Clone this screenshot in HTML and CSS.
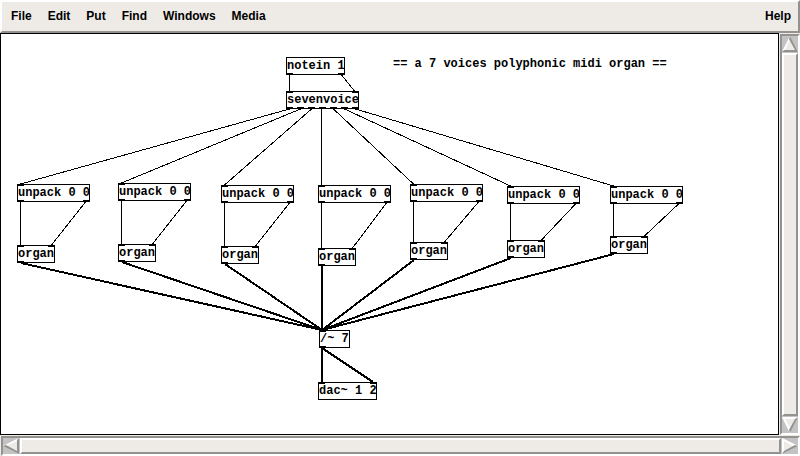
FILE: index.html
```html
<!DOCTYPE html>
<html lang="en">
<head>
<meta charset="utf-8">
<title>Patch editor</title>
<link rel="stylesheet" href="styles.css">
</head>
<body>
<nav class="menubar">
  <button type="button">File</button>
  <button type="button">Edit</button>
  <button type="button">Put</button>
  <button type="button">Find</button>
  <button type="button">Windows</button>
  <button type="button">Media</button>
  <button type="button" class="help">Help</button>
</nav>
<div class="workspace">
  <main class="canvas">
    <svg class="wires" viewBox="1 34 777 400" width="777" height="400" shape-rendering="crispEdges" aria-hidden="true">
      <!-- control cords -->
      <path class="cord" d="M289.5 75V91M341.5 75L354.5 91
        M289.5 109L20.5 184M300.5 109L121.5 183M311.5 109L224.5 185M321.5 109V185M333.5 109L413.5 184M344.5 109L510.5 186M355.5 109L613.5 186
        M20.5 202V245M85.5 202L51.5 245
        M121.5 201V244M186.5 201L152.5 244
        M224.5 203V246M289.5 203L255.5 246
        M321.5 203V248M386.5 203L352.5 248
        M413.5 202V242M478.5 202L444.5 242
        M510.5 204V240M575.5 204L541.5 240
        M613.5 204V236M678.5 204L644.5 236"/>
      <!-- signal cords -->
      <path class="signal" d="M21 263L322 330M122 262L322 330M225 264L322 330M322 266V330M414 260L322 330M511 258L322 330M614 254L322 330
        M322 348V382M322 348L373 382"/>
      <!-- inlets and outlets -->
      <path class="port" d="M286 74h7M338 74h7M286 92h7M352 92h7
        M286 108h7M297 108h7M308 108h7M319 108h7M330 108h7M341 108h7M352 108h7
        M17 185h7M17 201h7M83 201h7M17 246h7M48 246h7M17 262h7
        M118 184h7M118 200h7M184 200h7M118 245h7M149 245h7M118 261h7
        M221 186h7M221 202h7M287 202h7M221 247h7M252 247h7M221 263h7
        M318 186h7M318 202h7M384 202h7M318 249h7M349 249h7M318 265h7
        M410 185h7M410 201h7M476 201h7M410 243h7M441 243h7M410 259h7
        M507 187h7M507 203h7M573 203h7M507 241h7M538 241h7M507 257h7
        M610 187h7M610 203h7M676 203h7M610 237h7M641 237h7M610 253h7
        M319 331h7M319 347h7M318 383h7M370 383h7"/>
    </svg>
    <p class="comment">== a 7 voices polyphonic midi organ ==</p>
    <div class="node medium notein">notein 1</div>
    <div class="node wide sevenvoice">sevenvoice</div>
    <div class="node wide unpack1">unpack 0 0</div>
    <div class="node wide unpack2">unpack 0 0</div>
    <div class="node wide unpack3">unpack 0 0</div>
    <div class="node wide unpack4">unpack 0 0</div>
    <div class="node wide unpack5">unpack 0 0</div>
    <div class="node wide unpack6">unpack 0 0</div>
    <div class="node wide unpack7">unpack 0 0</div>
    <div class="node narrow organ1">organ</div>
    <div class="node narrow organ2">organ</div>
    <div class="node narrow organ3">organ</div>
    <div class="node narrow organ4">organ</div>
    <div class="node narrow organ5">organ</div>
    <div class="node narrow organ6">organ</div>
    <div class="node narrow organ7">organ</div>
    <div class="node tiny divide">/~ 7</div>
    <div class="node medium dac">dac~ 1 2</div>
  </main>
  <div class="scrollbar vertical">
    <button type="button" class="arrow" aria-label="Scroll up">
      <svg viewBox="0 0 16 16" width="16" height="16"><path class="face" d="M8 0L16 16H0z"/><path class="light" d="M8 0L0 16H2L8 3z"/><path class="dark" d="M8 0L16 16H0L2 14H13L7 3z"/></svg>
    </button>
    <div class="thumb"></div>
    <button type="button" class="arrow" aria-label="Scroll down">
      <svg viewBox="0 0 16 16" width="16" height="16"><path class="face" d="M0 0H16L8 16z"/><path class="light" d="M0 0H16L14 2H3L9 13L8 16z"/><path class="dark" d="M16 0L8 16L7 13L13 2z"/></svg>
    </button>
  </div>
  <div class="scrollbar horizontal">
    <button type="button" class="arrow" aria-label="Scroll left">
      <svg viewBox="0 0 16 16" width="16" height="16"><path class="face" d="M0 8L16 0V16z"/><path class="light" d="M0 8L16 0V2L3 8z"/><path class="dark" d="M0 8L16 16V0L14 2V13L3 7z"/></svg>
    </button>
    <div class="thumb"></div>
    <button type="button" class="arrow" aria-label="Scroll right">
      <svg viewBox="0 0 16 16" width="16" height="16"><path class="face" d="M0 0L16 8L0 16z"/><path class="light" d="M0 0V16L2 14V3L13 9L16 8z"/><path class="dark" d="M0 16L16 8L13 7L2 13z"/></svg>
    </button>
  </div>
</div>
</body>
</html>
```
FILE: styles.css
```css
* { box-sizing: border-box; }

html, body { height: 100%; }

body {
  margin: 0;
  display: flex;
  flex-direction: column;
  background: #eeebe7;
  color: #000;
}

button {
  margin: 0;
  padding: 0;
  border: 0;
  background: none;
  color: inherit;
  font: inherit;
}

.menubar {
  display: flex;
  flex: none;
  gap: 16px;
  height: 33px;
  padding: 0 7px 2px 9px;
  border: 2px solid #fff;
  border-right-color: #949290;
  border-bottom-color: #949290;
  font: bold 12px/24px "Liberation Sans", Arial, sans-serif;
}

.help { margin-left: auto; }

.workspace {
  display: grid;
  flex: 1;
  min-height: 0;
  grid-template-columns: 1fr 21px;
  grid-template-rows: 1fr 21px;
}

.canvas {
  position: relative;
  overflow: hidden;
  border: 1px solid #000;
  background: #fff;
  font: bold 12px/16px "Liberation Mono", "Courier New", monospace;
  white-space: nowrap;
}

.wires {
  position: absolute;
  left: 0;
  top: 0;
}

.wires path { fill: none; stroke: #000; }
.cord { stroke-width: 1px; }
.signal, .port { stroke-width: 2px; }

.node {
  position: absolute;
  height: 18px;
  border: 1px solid #000;
}

.wide { width: 73px; }
.medium { width: 59px; }
.narrow { width: 38px; }
.tiny { width: 31px; }

.comment {
  position: absolute;
  left: 392px;
  top: 22px;
  margin: 0;
}

.notein { left: 285px; top: 23px; }
.sevenvoice { left: 285px; top: 57px; }
.unpack1 { left: 16px; top: 150px; }
.unpack2 { left: 117px; top: 149px; }
.unpack3 { left: 220px; top: 151px; }
.unpack4 { left: 317px; top: 151px; }
.unpack5 { left: 409px; top: 150px; }
.unpack6 { left: 506px; top: 152px; }
.unpack7 { left: 609px; top: 152px; }
.organ1 { left: 16px; top: 211px; }
.organ2 { left: 117px; top: 210px; }
.organ3 { left: 220px; top: 212px; }
.organ4 { left: 317px; top: 214px; }
.organ5 { left: 409px; top: 208px; }
.organ6 { left: 506px; top: 206px; }
.organ7 { left: 609px; top: 202px; }
.divide { left: 318px; top: 296px; }
.dac { left: 317px; top: 348px; }

.scrollbar {
  display: flex;
  gap: 1px;
  border: 2px solid #949290;
  border-right-color: #fff;
  border-bottom-color: #fff;
  background: #c3c3c3;
}

.vertical {
  flex-direction: column;
  margin: 1px 0 0 1px;
}

.horizontal {
  grid-column: 1 / -1;
  margin: 1px 0 0 1px;
}

.thumb {
  flex: 1;
  border: 2px solid #949290;
  border-left-color: #fff;
  border-top-color: #fff;
  background: #eeebe7;
}

.arrow { flex: none; }
.arrow svg { display: block; }
.face { fill: #eeebe7; }
.light { fill: #fff; }
.dark { fill: #949290; }
```
